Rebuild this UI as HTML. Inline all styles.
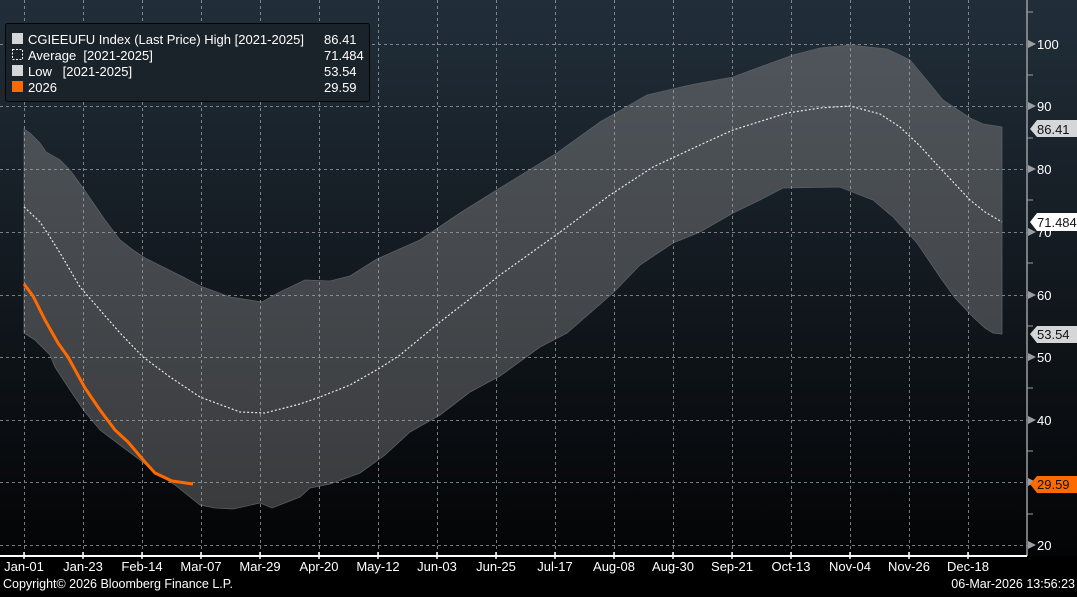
<!DOCTYPE html>
<html><head><meta charset="utf-8">
<style>
html,body{margin:0;padding:0;background:#000;}
body{width:1077px;height:592px;overflow:hidden;font-family:"Liberation Sans",sans-serif;}
</style></head>
<body>
<svg width="1077" height="592" viewBox="0 0 1077 592" xmlns="http://www.w3.org/2000/svg" font-family="Liberation Sans, sans-serif">
<defs>
<linearGradient id="bg" x1="0" y1="0" x2="0" y2="1">
<stop offset="0" stop-color="#212e39"/>
<stop offset="0.45" stop-color="#141b22"/>
<stop offset="1" stop-color="#030405"/>
</linearGradient>
<linearGradient id="band" x1="0" y1="0" x2="0" y2="1">
<stop offset="0" stop-color="#4f555b"/>
<stop offset="1" stop-color="#3a3b3d"/>
</linearGradient>
</defs>
<rect x="0" y="0" width="1077" height="556" fill="url(#bg)"/>
<rect x="0" y="556" width="1077" height="36" fill="#000"/>
<path fill="url(#band)" stroke="#5a5f64" stroke-width="0.8" d="M24,129 L30,133 L40,143 L46,152 L60,160 L70,170 L83,188 L105,220 L120,240 L133,250 L145,258 L165,268 L185,278 L200,286 L230,297 L262,302 L280,292 L305,280 L330,281 L350,276 L377,259 L420,240 L460,213 L500,188 L557,153 L600,122 L647,95 L690,85 L733,77 L760,67 L793,55 L820,48 L850,45 L887,49 L910,60 L925,78 L943,100 L970,118 L983,124 L1002,127 L1002,334 L993,333 L985,328 L973,317 L955,298 L940,277 L917,243 L893,217 L873,200 L860,195 L840,187 L783,188 L760,200 L733,213 L700,232 L673,243 L640,265 L613,293 L567,333 L540,347 L500,376 L470,392 L440,415 L410,432 L385,455 L360,473 L330,484 L310,488 L300,497 L272,508 L265,505 L260,503 L233,509 L215,508 L200,505 L175,485 L155,472 L140,460 L120,445 L100,430 L85,412 L70,390 L55,367 L50,355 L35,340 L24,333 Z"/>
<g stroke="#a8acb0" stroke-width="1" stroke-dasharray="3,3" fill="none" opacity="0.7">
<path d="M0,44.5H1027M0,106.5H1027M0,169.5H1027M0,232.5H1027M0,295.5H1027M0,357.5H1027M0,420.5H1027M0,482.5H1027M0,545.5H1027"/>
<path d="M24.5,0V556M83.5,0V556M142.5,0V556M201.5,0V556M260.5,0V556M319.5,0V556M378.5,0V556M437.5,0V556M496.5,0V556M555.5,0V556M614.5,0V556M673.5,0V556M732.5,0V556M791.5,0V556M850.5,0V556M909.5,0V556M968.5,0V556"/>
</g>
<path fill="none" stroke="#e8e8e8" stroke-width="1.2" stroke-dasharray="2,2" d="M24,207 L40,222 L50,237 L60,253 L80,287 L100,310 L120,333 L143,357 L170,377 L200,397 L240,412 L265,413 L300,404 L320,397 L350,385 L380,368 L400,355 L440,322 L480,291 L500,275 L563,230 L610,195 L653,167 L700,145 L733,130 L787,113 L820,108 L850,106 L880,114 L900,127 L920,146 L940,168 L970,200 L985,212 L1002,222"/>
<path fill="none" stroke="#ff6a00" stroke-width="3" stroke-linejoin="round" d="M24,284 L33,296 L45,320 L58,343 L68,357 L85,388 L100,410 L115,430 L128,442 L145,462 L155,473 L172,481 L193,484"/>
<line x1="1027" y1="0" x2="1027" y2="556" stroke="#9a9ea2" stroke-width="1.5"/>
<line x1="0" y1="556" x2="1027" y2="556" stroke="#ffffff" stroke-width="2"/>
<g stroke="#fff" stroke-width="1.5">
<path d="M24,552V559M83,552V559M142,552V559M201,552V559M260,552V559M319,552V559M378,552V559M437,552V559M496,552V559M555,552V559M614,552V559M673,552V559M732,552V559M791,552V559M850,552V559M909,552V559M968,552V559"/>
</g>
<g stroke="#9a9ea2" stroke-width="1">
<path d="M1027,12H1033M1027,75H1033M1027,138H1033M1027,200H1033M1027,263H1033M1027,326H1033M1027,388H1033M1027,451H1033M1027,514H1033"/>
</g>
<g fill="#9a9ea2">
<path d="M1028,40L1036,44L1028,48Z M1028,102L1036,106L1028,110Z M1028,165L1036,169L1028,173Z M1028,228L1036,232L1028,236Z M1028,291L1036,295L1028,299Z M1028,353L1036,357L1028,361Z M1028,416L1036,420L1028,424Z M1028,478L1036,482L1028,486Z M1028,541L1036,545L1028,549Z"/>
</g>
<g fill="#ffffff" font-size="13">
<text x="1037" y="49">100</text><text x="1037" y="111">90</text><text x="1037" y="174">80</text><text x="1037" y="237">70</text><text x="1037" y="300">60</text><text x="1037" y="362">50</text><text x="1037" y="425">40</text><text x="1037" y="550">20</text>
</g>
<path d="M1030,129 L1037,120 L1077,120 L1077,137 L1037,137 Z" fill="#d4d6d8"/>
<text x="1037" y="134" font-size="13" fill="#111">86.41</text>
<path d="M1030,222 L1037,213 L1077,213 L1077,231 L1037,231 Z" fill="#ffffff"/>
<text x="1037" y="227" font-size="13" fill="#111">71.484</text>
<path d="M1030,334 L1037,326 L1077,326 L1077,343 L1037,343 Z" fill="#d4d6d8"/>
<text x="1037" y="339" font-size="13" fill="#111">53.54</text>
<path d="M1030,484 L1037,476 L1077,476 L1077,493 L1037,493 Z" fill="#ff6a00"/>
<text x="1037" y="489" font-size="13" fill="#111">29.59</text>
<g fill="#ffffff" font-size="13" text-anchor="middle">
<text x="24" y="571">Jan-01</text><text x="83" y="571">Jan-23</text><text x="142" y="571">Feb-14</text><text x="201" y="571">Mar-07</text><text x="260" y="571">Mar-29</text><text x="319" y="571">Apr-20</text><text x="378" y="571">May-12</text><text x="437" y="571">Jun-03</text><text x="496" y="571">Jun-25</text><text x="555" y="571">Jul-17</text><text x="614" y="571">Aug-08</text><text x="673" y="571">Aug-30</text><text x="732" y="571">Sep-21</text><text x="791" y="571">Oct-13</text><text x="850" y="571">Nov-04</text><text x="909" y="571">Nov-26</text><text x="968" y="571">Dec-18</text>
</g>
<text x="3" y="588" font-size="12.5" fill="#ffffff">Copyright© 2026 Bloomberg Finance L.P.</text>
<text x="1075" y="588" font-size="12.5" fill="#ffffff" text-anchor="end">06-Mar-2026 13:56:23</text>
<rect x="5.5" y="23.5" width="364" height="78" rx="2" fill="#1b232a" stroke="#050505" stroke-width="1"/>
<rect x="12" y="33" width="11" height="11" fill="#d4d6d8"/>
<rect x="12.5" y="49.5" width="10" height="10" fill="none" stroke="#fff" stroke-width="1" stroke-dasharray="2,1.5"/>
<rect x="12" y="65" width="11" height="11" fill="#d4d6d8"/>
<rect x="12" y="81" width="11" height="11" fill="#ff6a00"/>
<g fill="#ffffff" font-size="13">
<text x="28" y="44">CGIEEUFU Index (Last Price) High [2021-2025]</text>
<text x="28" y="60">Average&#160;&#160;[2021-2025]</text>
<text x="28" y="76">Low&#160;&#160;&#160;[2021-2025]</text>
<text x="28" y="92">2026</text>
<text x="324" y="44">86.41</text>
<text x="324" y="60">71.484</text>
<text x="324" y="76">53.54</text>
<text x="324" y="92">29.59</text>
</g>
</svg>
</body></html>
